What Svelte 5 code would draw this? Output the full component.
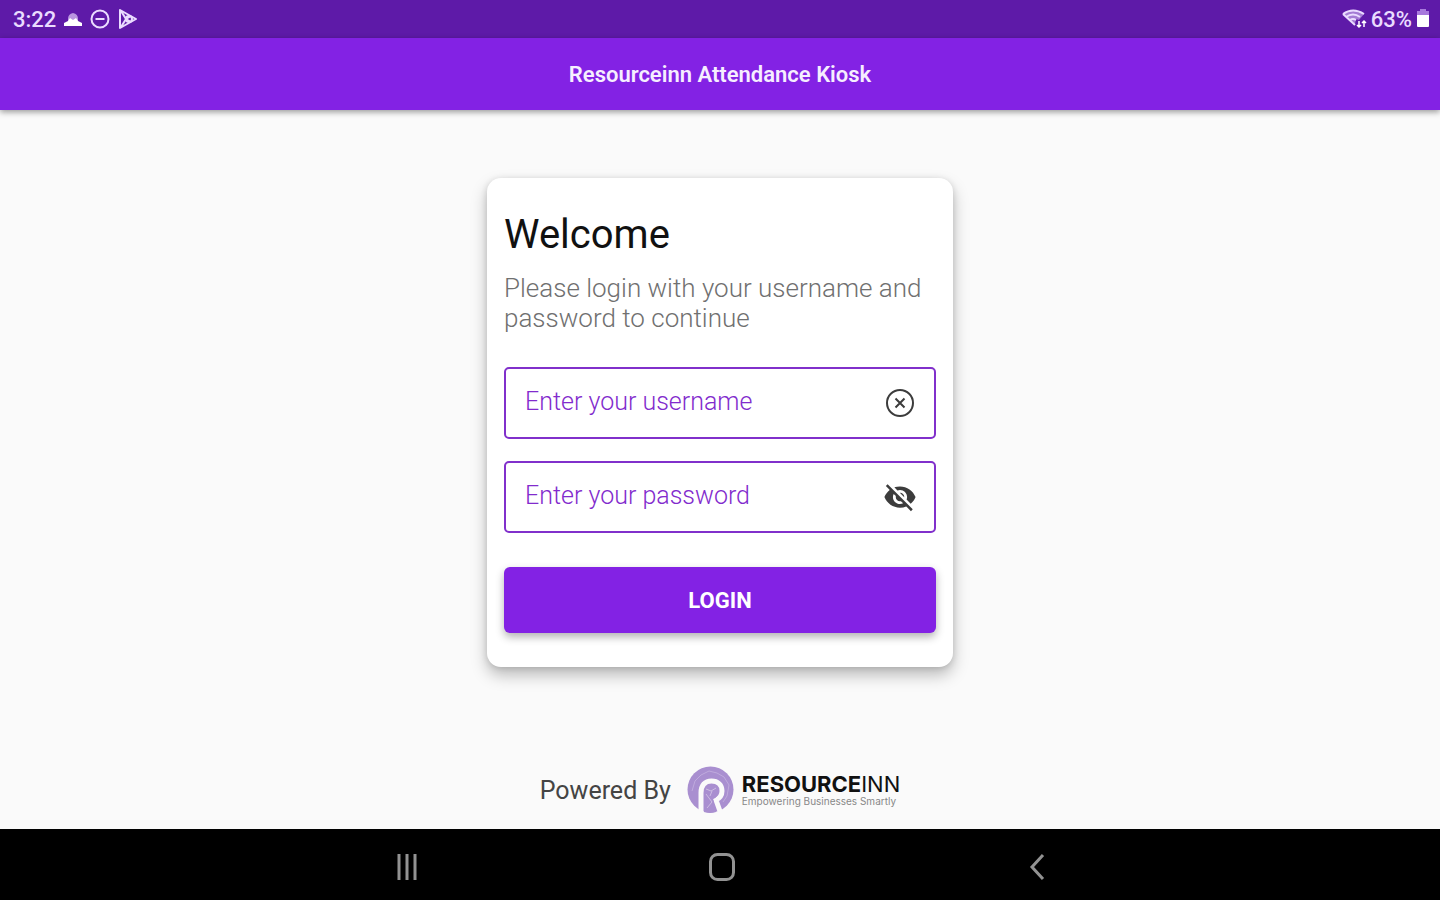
<script>
  let username = $state('');
  let password = $state('');
  let showPassword = $state(false);

  function login(event) {
    event.preventDefault();
  }
</script>

<div class="kiosk">
  <div class="status-bar">
    <div class="status-group">
      <span>3:22</span>
      <svg width="18" height="16" viewBox="0 0 18 16" aria-hidden="true">
        <path d="M4 8q0-5 5-6 5 1 5 6v3H4z" fill="#b995e0" />
        <path d="M0 15v-3l4-2 2-3 3 2 3-2 2 3 4 2v3z" fill="#fff" />
      </svg>
      <svg width="20" height="20" viewBox="0 0 20 20" fill="none" stroke="#eadcff" stroke-width="2" aria-hidden="true">
        <circle cx="10" cy="10" r="8.5" />
        <path d="M5.5 10h9" />
      </svg>
      <svg width="20" height="20" viewBox="0 0 20 20" fill="none" stroke="#eadcff" stroke-width="2" stroke-linejoin="round" aria-hidden="true">
        <path d="M2 1v18l16-9z" />
        <path d="M3 2l5 8-5 8M8 10l5-3M8 10l5 3" />
        <circle cx="11" cy="10" r="3" />
      </svg>
    </div>
    <div class="status-group right">
      <svg width="25" height="20" viewBox="0 0 25 20" aria-hidden="true">
        <path d="M1 5Q11-2 22 5L17 11l-3-1-1 5z" fill="#eadcff" opacity="0.5" />
        <path d="M1 5Q11-2 22 5M4 8q7-5 14 0M8 11q3-2 6 0M1 5l12 11" fill="none" stroke="#eadcff" stroke-width="2" />
        <path d="M17 18v-6M15 16l2 2 2-2M22 12v6M20 14l2-2 2 2" fill="none" stroke="#fff" stroke-width="1.5" />
      </svg>
      <span>63%</span>
      <svg width="14" height="20" viewBox="0 0 14 20" aria-hidden="true">
        <path d="M4 0h6v2h3v4H1V2h3z" fill="#a779dc" />
        <path d="M1 6h12v11q0 1-1 1H2q-1 0-1-1z" fill="#fff" />
      </svg>
    </div>
  </div>

  <header class="app-bar">
    <h1>Resourceinn Attendance Kiosk</h1>
  </header>

  <main>
    <form class="card" onsubmit={login}>
      <h2>Welcome</h2>
      <p>Please login with your username and password to continue</p>

      <div class="field">
        <input type="text" aria-label="Username" placeholder="Enter your username" bind:value={username} />
        <button type="button" class="icon-button" aria-label="Clear username" onclick={() => (username = '')}>
          <svg width="32" height="32" viewBox="0 0 32 32" fill="none" stroke="#3c3c3c" stroke-width="2">
            <circle cx="16" cy="16" r="13" />
            <path d="M11.5 11.5l9 9M20.5 11.5l-9 9" />
          </svg>
        </button>
      </div>

      <div class="field">
        <input
          type={showPassword ? 'text' : 'password'}
          aria-label="Password"
          placeholder="Enter your password"
          bind:value={password}
        />
        <button type="button" class="icon-button" aria-label="Show password" onclick={() => (showPassword = !showPassword)}>
          <svg width="34" height="34" viewBox="0 0 24 24" fill="#3c3c3c">
            <path d="M12 7c2.76 0 5 2.24 5 5 0 .65-.13 1.26-.36 1.83l2.92 2.92c1.51-1.26 2.7-2.89 3.43-4.75-1.73-4.39-6-7.5-11-7.5-1.4 0-2.74.25-3.98.7l2.16 2.16C10.74 7.13 11.35 7 12 7zM2 4.27l2.28 2.28.46.46C3.08 8.3 1.78 10.02 1 12c1.73 4.39 6 7.5 11 7.5 1.55 0 3.03-.3 4.38-.84l.42.42L19.73 22 21 20.73 3.27 3 2 4.27zM7.53 9.8l1.55 1.55c-.05.21-.08.43-.08.65 0 1.66 1.34 3 3 3 .22 0 .44-.03.65-.08l1.55 1.55c-.67.33-1.41.53-2.2.53-2.76 0-5-2.24-5-5 0-.79.2-1.53.53-2.2zm4.31-.78l3.15 3.15.02-.16c0-1.66-1.34-3-3-3l-.17.01z" />
          </svg>
        </button>
      </div>

      <button type="submit" class="login">LOGIN</button>
    </form>
  </main>

  <footer>
    <span class="powered">Powered By</span>
    <svg width="47" height="48" viewBox="0 0 47 48" aria-hidden="true">
      <circle cx="23.500" cy="23.500" r="23" fill="#a98fd0" />
      <path d="M14 49V27C14 19 18 15 24.500 15S35 19 35 25 31 33 29 34L34 48" fill="none" stroke="#fafafa" stroke-width="5" />
      <path d="M17 46V26a7 7 0 1 1 9 7l3 13q-6 2-12 0z" fill="#a98fd0" />
      <path d="M19 23l5 2 5-3M23 30l2-5M19 28l6 8-5 6" fill="none" stroke="#cdbde3" stroke-width="1" />
      <path d="M5 25l3-10 6-6 8-4 8 2 7 4 5 8-2 11-4 6" fill="none" stroke="#bfaadd" stroke-width="1" />
    </svg>
    <div class="brand">
      <div class="brand-name"><b>RESOURCE</b>INN</div>
      <div class="tagline">Empowering Businesses Smartly</div>
    </div>
  </footer>

  <nav aria-label="System navigation">
    <div class="nav-buttons">
      <button type="button" aria-label="Recent apps">
        <svg width="32" height="32" viewBox="0 0 32 32" fill="none" stroke="#929292" stroke-width="3">
          <path d="M8 3v26M16 3v26M24 3v26" />
        </svg>
      </button>
      <button type="button" aria-label="Home">
        <svg width="32" height="32" viewBox="0 0 32 32" fill="none" stroke="#929292" stroke-width="3">
          <rect x="4.500" y="3.500" width="23" height="25" rx="7" />
        </svg>
      </button>
      <button type="button" aria-label="Back">
        <svg width="32" height="32" viewBox="0 0 32 32" fill="none" stroke="#929292" stroke-width="3">
          <path d="M22 4L11 16l11 12" />
        </svg>
      </button>
    </div>
  </nav>
</div>

<style>
  :global(body) {
    margin: 0;
  }

  .kiosk {
    min-height: 100vh;
    display: flex;
    flex-direction: column;
    background: #fafafa;
    font-family: Roboto, 'Liberation Sans', sans-serif;
  }

  button,
  input {
    font-family: inherit;
  }

  svg {
    display: block;
    flex-shrink: 0;
  }

  .status-bar {
    display: flex;
    justify-content: space-between;
    align-items: center;
    height: 38px;
    padding: 0 10px 0 13px;
    box-sizing: border-box;
    background: #5e1aa8;
    color: #eadcff;
    font-size: 22px;
    font-weight: 500;
  }

  .status-group {
    display: flex;
    align-items: center;
    gap: 8px;
  }

  .right {
    gap: 4px;
  }

  .app-bar {
    display: flex;
    align-items: center;
    justify-content: center;
    height: 72px;
    background: #8322e4;
    box-shadow: 0 2px 6px rgba(0, 0, 0, 0.4);
  }

  h1 {
    margin: 0;
    color: #f6eeff;
    font-size: 22px;
    font-weight: 600;
  }

  main {
    flex: 1;
    display: flex;
    justify-content: center;
    align-items: flex-start;
    padding: 68px 16px 32px;
  }

  .card {
    width: 100%;
    max-width: 466px;
    box-sizing: border-box;
    padding: 33px 17px 34px;
    background: #fff;
    border-radius: 14px;
    box-shadow: 0 8px 16px rgba(0, 0, 0, 0.26), 0 1px 6px rgba(0, 0, 0, 0.12);
  }

  h2 {
    margin: 0;
    color: #111;
    font-size: 40px;
    font-weight: 400;
    line-height: 48px;
  }

  p {
    margin: 14px 0 34px;
    color: #707070;
    font-size: 26px;
    font-weight: 300;
    line-height: 30px;
  }

  .field {
    display: flex;
    align-items: center;
    height: 72px;
    margin-bottom: 22px;
    padding: 0 17px 0 19px;
    box-sizing: border-box;
    border: 2px solid #8130cb;
    border-radius: 5px;
  }

  .field input {
    flex: 1;
    min-width: 0;
    padding: 0 0 3px;
    border: 0;
    outline: 0;
    background: none;
    color: #222;
    font-size: 25px;
    font-weight: 300;
  }

  .field input::placeholder {
    color: #822bcd;
    opacity: 1;
  }

  .icon-button {
    display: flex;
    align-items: center;
    justify-content: center;
    width: 34px;
    height: 34px;
    padding: 0;
    border: 0;
    background: none;
    cursor: pointer;
  }

  .login {
    display: block;
    width: 100%;
    height: 66px;
    margin-top: 34px;
    border: 0;
    border-radius: 6px;
    background: #8322e4;
    box-shadow: 0 4px 8px rgba(0, 0, 0, 0.3);
    color: #fff;
    font-size: 22px;
    font-weight: 700;
    cursor: pointer;
  }

  footer {
    display: flex;
    align-items: center;
    justify-content: center;
    padding-bottom: 15px;
  }

  .powered {
    margin-right: 16px;
    color: #444;
    font-size: 25px;
  }

  .brand {
    margin-left: 8px;
  }

  .brand-name {
    color: #111;
    font-family: Inter, sans-serif;
    font-size: 22px;
    line-height: 22px;
  }

  .tagline {
    color: #888;
    font-family: Inter, sans-serif;
    font-size: 10px;
    line-height: 12px;
  }

  nav {
    display: flex;
    justify-content: center;
    padding: 4px 0 0 4px;
    height: 67px;
    background: #000;
  }

  .nav-buttons {
    display: grid;
    grid-template-columns: repeat(3, 1fr);
    width: 100%;
    max-width: 944px;
  }

  nav button {
    display: flex;
    align-items: center;
    justify-content: center;
    padding: 0;
    border: 0;
    background: none;
    cursor: pointer;
  }
</style>
